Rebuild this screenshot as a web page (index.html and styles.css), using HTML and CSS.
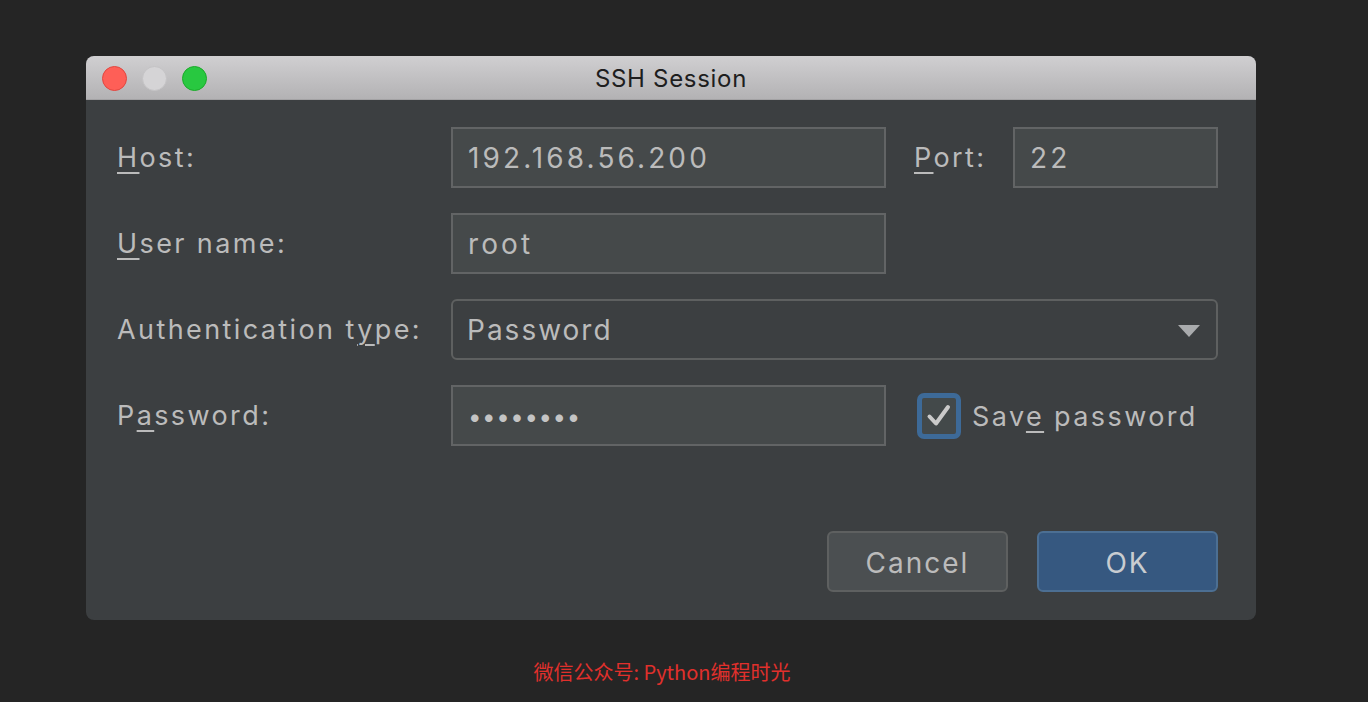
FILE: index.html
```html
<!DOCTYPE html>
<html>
<head>
<meta charset="utf-8">
<link rel="stylesheet" href="styles.css">
</head>
<body>
<div class="page">
  <div class="dialog">
    <div class="titlebar">
      <div class="lights">
        <span class="light red"></span>
        <span class="light grey"></span>
        <span class="light green"></span>
      </div>
      <div class="title">SSH Session</div>
    </div>
    <div class="content">
      <div class="form">
        <label class="label"><u>H</u>ost:</label>
        <div class="field">192.168.56.200</div>
        <label class="label port-label"><u>P</u>ort:</label>
        <div class="field">22</div>

        <label class="label"><u>U</u>ser name:</label>
        <div class="field">root</div>
        <div class="spacer"></div>

        <label class="label">Authentication t<u>y</u>pe:</label>
        <div class="select">
          <span>Password</span>
          <svg class="arrow" width="22" height="12" viewBox="0 0 22 12"><path d="M0 0 H22 L11 12 Z" fill="#a9abad"/></svg>
        </div>

        <label class="label">P<u>a</u>ssword:</label>
        <div class="field dots">••••••••</div>
        <div class="check-wrap">
          <span class="checkbox">
            <svg width="30" height="30" viewBox="0 0 30 30"><path d="M5.5 15.5 L12 22.5 L24 6" fill="none" stroke="#cacaca" stroke-width="4" stroke-linecap="round" stroke-linejoin="round"/></svg>
          </span>
          <span class="check-label">Sav<u>e</u> password</span>
        </div>
      </div>
      <div class="buttons">
        <button class="btn">Cancel</button>
        <button class="btn primary">OK</button>
      </div>
    </div>
  </div>
  <div class="watermark">微信公众号: Python编程时光</div>
</div>
</body>
</html>
```

FILE: styles.css
```css
* { box-sizing: border-box; }
html, body {
  margin: 0;
  height: 100%;
  background: #252525;
}
body {
  font-family: Inter, "Noto Sans", "Liberation Sans", sans-serif;
  color: #bbbbbb;
}
.page {
  padding: 56px 0 0 86px;
  width: 1256px;
}
.dialog {
  width: 1170px;
  height: 564px;
  border-radius: 8px;
  overflow: hidden;
  background: #3c3f41;
  display: flex;
  flex-direction: column;
}
.titlebar {
  height: 44px;
  background: linear-gradient(#d0cfd1, #b3b2b4);
  border-bottom: 1px solid #a3a2a4;
  position: relative;
  display: flex;
  align-items: center;
  justify-content: center;
}
.lights {
  position: absolute;
  left: 16px;
  top: 10px;
  display: flex;
  gap: 15px;
}
.light {
  width: 25px;
  height: 25px;
  border-radius: 50%;
  display: block;
}
.red { background: #fe5f57; border: 1px solid #e2463f; }
.grey { background: #d5d4d6; border: 1px solid #c4c3c5; }
.green { background: #28c840; border: 1px solid #1aab29; }
.title {
  font-size: 24px;
  color: #1e1e1e;
  letter-spacing: 0.7px;
  padding-top: 2px;
}
.content {
  flex: 1;
  padding: 27px 38px 28px 31px;
  display: flex;
  flex-direction: column;
  justify-content: space-between;
}
.form {
  display: grid;
  grid-template-columns: 334px 435px 127px 205px;
  grid-auto-rows: 61px;
  row-gap: 25px;
  align-items: center;
}
.spacer { grid-column: 3 / 5; }
.label {
  font-size: 27px;
  letter-spacing: 2.4px;
  color: #bbbbbb;
  white-space: nowrap;
}
u {
  text-decoration-thickness: 2px;
  text-underline-offset: 5px;
}
.port-label { padding-left: 28px; }
.field {
  height: 61px;
  background: #45494a;
  border: 2px solid #626465;
  padding: 0 15px;
  display: flex;
  align-items: center;
  font-size: 28px;
  letter-spacing: 3.1px;
  color: #bbbbbb;
}
.dots {
  font-size: 24px;
  letter-spacing: 0.6px;
  color: #c4c4c4;
  padding-top: 2px;
}
.select {
  grid-column: 2 / 5;
  height: 61px;
  border: 2px solid #5e6060;
  border-radius: 6px;
  background: #3c3f41;
  display: flex;
  align-items: center;
  justify-content: space-between;
  padding: 0 16px 0 14px;
  font-size: 28px;
  letter-spacing: 2px;
}
.arrow { margin-top: 2px; }
.check-wrap {
  grid-column: 3 / 5;
  display: flex;
  align-items: center;
  padding-left: 31px;
  gap: 11px;
}
.checkbox {
  width: 44px;
  height: 46px;
  border-radius: 7px;
  border: 5px solid #3d6a98;
  background: #43494a;
  display: flex;
  align-items: center;
  justify-content: center;
}
.check-label {
  font-size: 27px;
  letter-spacing: 2.4px;
  padding-top: 2px;
  white-space: nowrap;
}
.buttons {
  display: flex;
  justify-content: flex-end;
  gap: 29px;
}
.btn {
  width: 181px;
  height: 61px;
  border-radius: 6px;
  border: 2px solid #5e6060;
  background: #4b4f51;
  color: #bbbbbb;
  font-family: inherit;
  font-size: 28px;
  letter-spacing: 2px;
  padding-top: 4px;
}
.btn.primary {
  background: #365880;
  border-color: #4c6f93;
  color: #c8ccd0;
}
.watermark {
  width: 1170px;
  text-align: center;
  padding-right: 18px;
  margin-top: 37px;
  color: #e0302c;
  font-size: 20px;
  font-family: "Noto Sans CJK SC", sans-serif;
}
```
